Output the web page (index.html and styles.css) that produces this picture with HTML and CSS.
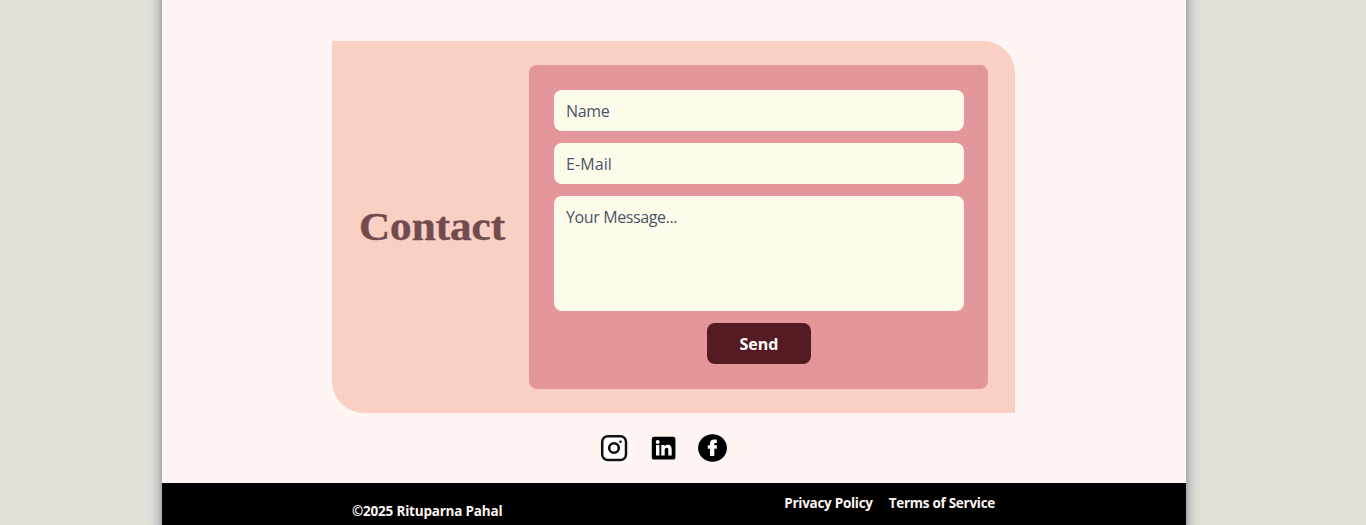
FILE: index.html
```html
<!DOCTYPE html>
<html lang="en">
<head>
<meta charset="utf-8">
<title>Contact</title>
<link rel="stylesheet" href="styles.css">
</head>
<body>
<div class="page">
  <main class="main">
    <section class="contact">
      <h2 class="contact-title"><span class="title-text">Contact</span></h2>
      <form class="form">
        <input class="field name" type="text" placeholder="Name">
        <input class="field email" type="email" placeholder="E-Mail">
        <textarea class="field message" placeholder="Your Message..."></textarea>
        <button class="send" type="button"><span>Send</span></button>
      </form>
    </section>
    <nav class="social">
      <a class="social-link" aria-label="Instagram"><svg width="30" height="30" viewBox="0 0 30 30"><rect x="1" y="1" width="27" height="27" fill="#fff"/><rect x="2.2" y="2.2" width="23.8" height="23.8" rx="5.5" fill="none" stroke="#111" stroke-width="2.5"/><circle cx="14" cy="14" r="4.8" fill="none" stroke="#111" stroke-width="2.6"/><circle cx="20.5" cy="7.8" r="1.3" fill="#111"/></svg></a>
      <a class="social-link" aria-label="LinkedIn"><svg width="30" height="30" viewBox="0 0 30 30"><rect x="1" y="1" width="28" height="27" fill="#f8f6f5"/><rect x="2.8" y="2.8" width="23.6" height="22.8" rx="2.2"/><g fill="#fff"><circle cx="8.7" cy="7.9" r="2"/><path d="M7 11.1h3.4v10.5H7zM12.3 11.1h3.2v1.5c.8-1.2 1.9-1.8 3.3-1.8 2.7 0 3.9 1.7 3.9 4.7v6.1h-3.4v-5.5c0-1.6-.5-2.4-1.7-2.4s-1.9.9-1.9 2.4v5.5h-3.4z"/></g></svg></a>
      <a class="social-link" aria-label="Facebook"><svg width="30" height="30" viewBox="0 0 30 30"><rect x="1" y="1" width="28" height="27" fill="#f8f6f5"/><ellipse cx="14.5" cy="14" rx="14.4" ry="13.8"/><path fill="#fff" d="M12 22v-7.2H9.8v-3.5H12V9.8c0-2.8 1.3-4.3 4.4-4.3h2.4V9h-1.3c-.9 0-1.2.4-1.2 1.2v1.1H19l-.4 3.5h-2.3V22z"/></svg></a>
    </nav>
  </main>
  <footer class="footer">
    <p class="copyright">©2025 Rituparna Pahal</p>
    <div class="links"><a class="privacy">Privacy Policy</a><a class="terms">Terms of Service</a></div>
  </footer>
</div>
</body>
</html>
```
FILE: styles.css
```css
* { box-sizing: border-box; }
body {
  margin: 0;
  height: 525px;
  background: linear-gradient(90deg,
    #e3e0d9 145px, #dcdbd6 152px, #c9cbc8 157px, #b5b9b8 160px, #a3a8aa 162px,
    #a3a8aa 1186px, #b5b9b8 1188px, #c9cbc8 1191px, #dcdbd6 1196px, #e3e0d9 1203px);
  font-family: "Open Sans", "Noto Sans", sans-serif;
}
.page {
  width: 1024px;
  height: 525px;
  margin-left: 162px;
  background: #fff6f3;
}
.main {
  height: 483px;
  padding-top: 41px;
}
.contact {
  display: flex;
  align-items: center;
  width: 683px;
  height: 372px;
  margin-left: 170px;
  padding: 0 27px;
  background: #facfc4;
  border-radius: 0 32px 0 32px;
}
.contact-title {
  width: 170px;
  margin: 0;
  color: #724b4e;
  font: bold 39px/50px "Liberation Serif", serif;
}
.title-text {
  display: inline-block;
  transform: scaleX(1.105);
  transform-origin: 0 50%;
  -webkit-text-stroke: 0.4px #724b4e;
}
.form {
  display: flex;
  flex-direction: column;
  align-items: center;
  gap: 12px;
  width: 459px;
  height: 324px;
  padding: 25px 24px 25px 25px;
  background: #e3979b;
  border-radius: 8px;
}
.field {
  display: block;
  width: 410px;
  height: 41px;
  margin: 0;
  padding: 0 12px;
  border: 0;
  border-radius: 8px;
  background: #fffbea;
  font: 16px/22px "Open Sans", "Noto Sans", sans-serif;
  resize: none;
}
.field::placeholder {
  color: #475569;
  opacity: 1;
}
.name { letter-spacing: -0.3px; }
.email { letter-spacing: 0.1px; }
.message {
  height: 115px;
  padding-top: 10px;
  letter-spacing: -0.38px;
}
.send {
  width: 104px;
  height: 41px;
  padding: 0;
  border: 0;
  border-radius: 8px;
  background: #541b22;
  color: #fff;
  font: bold 16px/22px "Open Sans", "Noto Sans", sans-serif;
}
.social {
  display: flex;
  gap: 19px;
  margin: 21px 0 0 438px;
}
.social-link, .social-link svg { display: block; }
.footer {
  display: flex;
  justify-content: space-between;
  height: 42px;
  padding: 0 191px 0 190px;
  background: #000;
  color: #fff6f3;
  font-size: 13.5px;
  font-weight: 700;
  line-height: 20px;
}
.copyright {
  margin: 18px 0 0;
  letter-spacing: -0.2px;
}
.links {
  display: flex;
  gap: 16px;
  margin-top: 10px;
  letter-spacing: -0.28px;
}
```
